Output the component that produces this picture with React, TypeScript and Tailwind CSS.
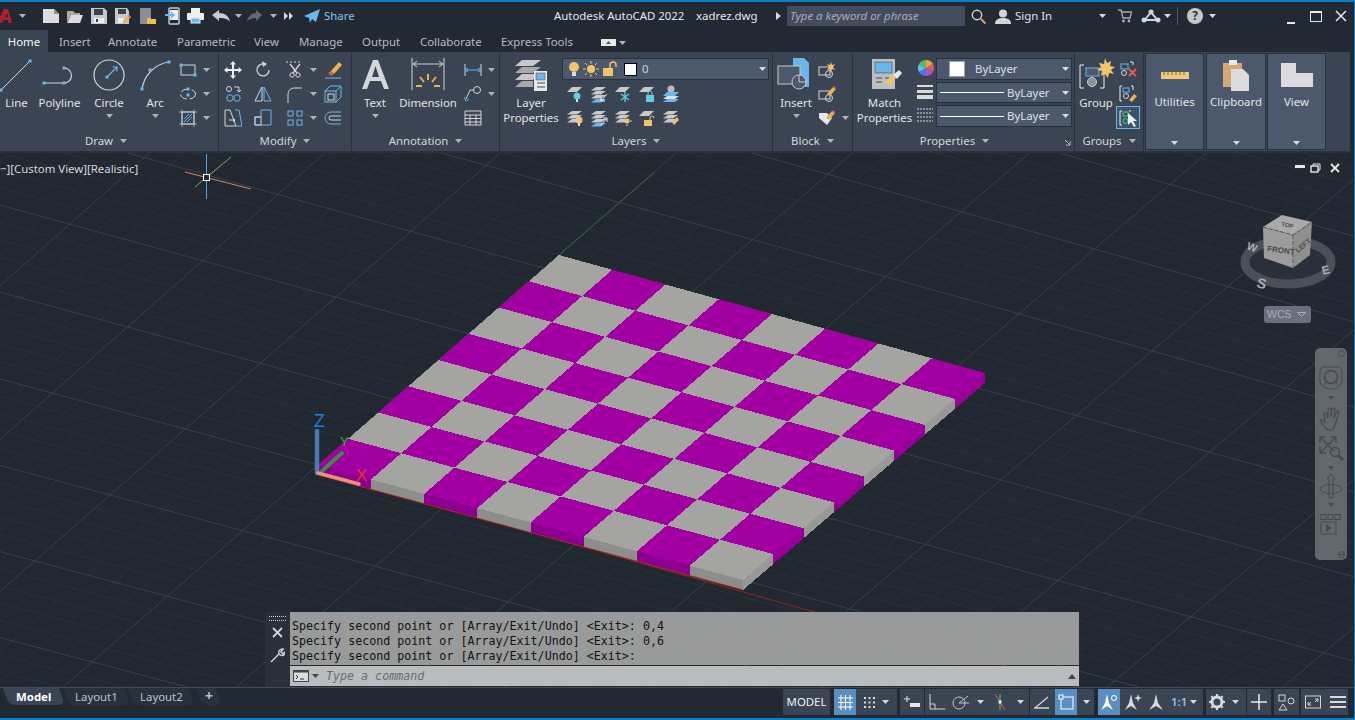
import type { ReactNode } from "react";

const BLUE = "#6ab7ee";
const LT = "#d4d6d8";

type P = [number, number];

// board corners read off the picture, u runs along the red axis, v along the green one
const O: P = [318, 465];
const F: P = [743, 580];
const B: P = [559, 255];
const R: P = [985, 373];

const pt = (u: number, v: number): P => {
  const a = u / 8;
  const b = v / 8;
  return [
    O[0] + a * (F[0] - O[0]) + b * (B[0] - O[0]) + a * b * (R[0] - F[0] - B[0] + O[0]),
    O[1] + a * (F[1] - O[1]) + b * (B[1] - O[1]) + a * b * (R[1] - F[1] - B[1] + O[1]),
  ];
};

const poly = (pts: P[]) => pts.map((p) => `${p[0].toFixed(1)},${p[1].toFixed(1)}`).join(" ");
const down = (p: P, t: number): P => [p[0], p[1] + t];

function range(from: number, to: number) {
  const out: number[] = [];
  for (let i = from; i <= to; i++) out.push(i);
  return out;
}

function Grid() {
  return (
    <g>
      {range(-80, 120).map((k) => {
        const a = pt(k / 2, -40);
        const b = pt(k / 2, 60);
        return (
          <line key={"u" + k} x1={a[0]} y1={a[1]} x2={b[0]} y2={b[1]} stroke={k % 5 === 0 ? "#39414e" : "#2a313c"} strokeWidth="1" />
        );
      })}
      {range(-80, 120).map((k) => {
        const a = pt(-40, k / 2);
        const b = pt(60, k / 2);
        return (
          <line key={"v" + k} x1={a[0]} y1={a[1]} x2={b[0]} y2={b[1]} stroke={k % 5 === 0 ? "#39414e" : "#2a313c"} strokeWidth="1" />
        );
      })}
    </g>
  );
}

function Board() {
  const t = 10;
  return (
    <g shapeRendering="crispEdges">
      {range(0, 7).map((i) => (
        <polygon key={"f" + i} points={poly([pt(i, 0), pt(i + 1, 0), down(pt(i + 1, 0), t), down(pt(i, 0), t)])} fill={i % 2 === 0 ? "#8c008f" : "#8d8e8b"} />
      ))}
      {range(0, 7).map((j) => (
        <polygon key={"r" + j} points={poly([pt(8, j), pt(8, j + 1), down(pt(8, j + 1), t), down(pt(8, j), t)])} fill={j % 2 === 0 ? "#989996" : "#980099"} />
      ))}
      {range(0, 7).map((i) =>
        range(0, 7).map((j) => (
          <polygon key={i + "-" + j} points={poly([pt(i, j), pt(i + 1, j), pt(i + 1, j + 1), pt(i, j + 1)])} fill={(i + j) % 2 === 0 ? "#a300a3" : "#a4a5a1"} />
        ))
      )}
    </g>
  );
}

function Scene() {
  return (
    <svg className="absolute inset-0" width="1354" height="535" viewBox="0 153 1354 535">
      <Grid />
      <line x1="559" y1="255" x2="655" y2="172" stroke="#2f6b38" />
      <line x1="318" y1="472" x2="1080" y2="687" stroke="#8f2626" />
      <Board />
      <line x1="318" y1="475" x2="743" y2="590" stroke="#a52a22" />

      {/* UCS icon */}
      <line x1="322" y1="471" x2="342" y2="453" stroke="#3f8a45" strokeWidth="4" strokeLinecap="round" />
      <line x1="317" y1="473" x2="317" y2="431" stroke="#4a79b5" strokeWidth="4.5" strokeLinecap="round" />
      <line x1="318" y1="473" x2="359" y2="484" stroke="#e8917f" strokeWidth="3.5" strokeLinecap="round" />
      <text x="314" y="427" fill="#1f7de0" fontFamily="Liberation Sans, sans-serif" fontSize="18">Z</text>
      <text x="356" y="481" fill="#e03a2a" fontFamily="Liberation Sans, sans-serif" fontSize="17">X</text>
      <text x="340" y="446" fill="#35b035" fontFamily="Liberation Sans, sans-serif" fontSize="13">Y</text>

      {/* crosshair */}
      <line x1="206.5" y1="154" x2="206.5" y2="199" stroke="#5a9fe0" />
      <line x1="185" y1="172" x2="251" y2="189" stroke="#d9835f" />
      <line x1="195" y1="187" x2="231" y2="157" stroke="#7fb040" />
      <rect x="203.5" y="174.5" width="6" height="6" fill="#222933" stroke="#fff" />

      {/* view cube */}
      <ellipse cx="1288" cy="262" rx="43" ry="22" fill="#2a3038" stroke="#4b5058" strokeWidth="9" />
      <polygon points="1282,215 1312,222 1293,235 1263,227" fill="#a9a9a8" />
      <polygon points="1263,227 1293,235 1293,268 1264,258" fill="#9c9c9b" />
      <polygon points="1293,235 1312,222 1310,255 1293,268" fill="#8f8f8e" />
      <polyline points="1263,227 1293,235 1312,222" fill="none" stroke="#5a5a5a" strokeDasharray="4 2" />
      <line x1="1293" y1="235" x2="1293" y2="268" stroke="#5a5a5a" strokeDasharray="4 2" />
      <text x="1267" y="251" fill="#4a4a4a" fontFamily="Liberation Sans, sans-serif" fontSize="8" fontWeight="700" transform="rotate(8 1267 251)">FRONT</text>
      <text x="1281" y="226" fill="#4a4a4a" fontFamily="Liberation Sans, sans-serif" fontSize="6" fontWeight="700" transform="rotate(12 1281 226)">TOP</text>
      <text x="1298" y="253" fill="#4a4a4a" fontFamily="Liberation Sans, sans-serif" fontSize="7" fontWeight="700" transform="rotate(-40 1298 253)">LEFT</text>
      <text x="1246" y="249" fill="#a9acb0" fontFamily="Liberation Sans, sans-serif" fontSize="11" fontWeight="700" transform="rotate(20 1246 249)">W</text>
      <text x="1323" y="275" fill="#a9acb0" fontFamily="Liberation Sans, sans-serif" fontSize="12" fontWeight="700" transform="rotate(-15 1323 275)">E</text>
      <text x="1256" y="287" fill="#a9acb0" fontFamily="Liberation Sans, sans-serif" fontSize="14" fontWeight="700" transform="rotate(15 1256 287)">S</text>
    </svg>
  );
}

function Caret({ light }: { light?: boolean }) {
  return (
    <svg width="7" height="4" viewBox="0 0 7 4" className="shrink-0">
      <polygon points="0,0 7,0 3.5,4" fill={light ? "#d8dadc" : "#aeb4bc"} />
    </svg>
  );
}

function Grip({ x, y }: { x: number; y: number }) {
  return <rect x={x - 1.5} y={y - 1.5} width="3" height="3" fill={BLUE} />;
}

function Svg({ w, h, children }: { w: number; h: number; children: ReactNode }) {
  return (
    <svg width={w} height={h} viewBox={`0 0 ${w} ${h}`} fill="none" className="shrink-0">
      {children}
    </svg>
  );
}

function Big({ cls, label, caret, children }: { cls: string; label: ReactNode; caret?: boolean; children: ReactNode }) {
  return (
    <div className={`flex flex-col items-center shrink-0 pt-[5px] ${cls}`}>
      <div className="h-[34px] flex items-center justify-center">{children}</div>
      <div className="mt-[3px] text-center leading-[15px] text-[#e2e5e9] whitespace-nowrap">{label}</div>
      {caret && (
        <div className="mt-[4px]">
          <Caret />
        </div>
      )}
    </div>
  );
}

function Small({ caret, cls, children }: { caret?: boolean; cls?: string; children: ReactNode }) {
  return (
    <div className={`h-[24px] flex items-center ${cls ?? ""}`}>
      <div className="w-[18px] h-[18px] flex items-center justify-center shrink-0">{children}</div>
      {caret && (
        <div className="ml-[6px]">
          <Caret />
        </div>
      )}
    </div>
  );
}

function Panel({ title, cls, titleCls, arrow, children }: { title: string; cls: string; titleCls?: string; arrow?: boolean; children: ReactNode }) {
  return (
    <div className={`relative shrink-0 flex flex-col border-r border-[#2a313c] ${cls}`}>
      <div className="h-[79px] flex">{children}</div>
      <div className={`h-[18px] flex items-center justify-center gap-[7px] text-[#d3d7dc] ${titleCls ?? ""}`}>
        <span>{title}</span>
        <Caret />
      </div>
      {arrow && (
        <svg className="absolute right-[3px] bottom-[5px]" width="7" height="7" viewBox="0 0 7 7">
          <path d="M1 1l5 5M6 2v4H2" stroke="#c8ccd0" />
        </svg>
      )}
    </div>
  );
}

function Sheets({ n = 3, tone = "#c9c9c9", top = 2 }: { n?: number; tone?: string; top?: number }) {
  return (
    <>
      {range(0, n - 1).map((i) => (
        <polygon key={i} points={`6,${top + i * 4} 16,${top + i * 4} 11,${top + 3.5 + i * 4} 1,${top + 3.5 + i * 4}`} fill={tone} />
      ))}
    </>
  );
}

function TitleBar() {
  return (
    <div className="h-[28px] flex items-center shrink-0">
      <svg width="12" height="16" viewBox="0 0 12 16" className="shrink-0">
        <path d="M-3 15L4 1h4l4 14H8.500L8 12H3.500L2 15zM5 9.500h3L7.200 5z" fill="#b3202a" fillRule="evenodd" />
      </svg>
      <div className="ml-[7px]"><Caret /></div>
      <div className="ml-[17px]">
        <Svg w={16} h={16}>
          <path d="M0 1h11l5 5v9H0z" fill="#dcdcdc" />
          <path d="M11 1v5h5z" fill="#8a8f96" />
        </Svg>
      </div>
      <div className="ml-[8px]">
        <Svg w={16} h={16}>
          <path d="M0 14V3h6l2 2h5v2H4z" fill="#a9abad" />
          <path d="M4 7h12l-3 8H0z" fill="#dcdcdc" />
        </Svg>
      </div>
      <div className="ml-[8px]">
        <Svg w={16} h={16}>
          <path d="M0 0h13l3 3v13H0z" fill="#c6c8ca" />
          <rect x="3" y="1" width="9" height="6" fill="#3a414d" />
          <rect x="3" y="10" width="10" height="5" fill="#eee" />
          <rect x="5" y="11" width="2" height="3" fill="#3a414d" />
        </Svg>
      </div>
      <div className="ml-[8px]">
        <Svg w={16} h={16}>
          <path d="M0 0h12l2 3v13H0z" fill="#c6c8ca" />
          <rect x="3" y="1" width="8" height="5" fill="#3a414d" />
          <rect x="3" y="10" width="6" height="5" fill="#eee" />
          <path d="M8 13l6-6 2 2-6 6H8z" fill="#e8b44a" />
          <path d="M13 8l1-1 2 2-1 1z" fill="#e25a5a" />
        </Svg>
      </div>
      <div className="ml-[9px]">
        <Svg w={16} h={18}>
          <rect x="0" y="1" width="11" height="16" rx="1" fill="#8b8f95" />
          <path d="M7 11h3l1 1h5v5H7z" fill="#f0c04f" />
        </Svg>
      </div>
      <div className="ml-[9px]">
        <Svg w={15} h={18}>
          <rect x="4" y="1" width="10" height="16" rx="1" fill="none" stroke="#c9cbcd" strokeWidth="1.5" />
          <rect x="5" y="3" width="8" height="10" fill="#eee" />
          <path d="M0 7h6V4l4 4-4 4V9H0z" fill={BLUE} />
        </Svg>
      </div>
      <div className="ml-[7px]">
        <Svg w={17} h={16}>
          <rect x="4" y="0" width="9" height="5" fill="#eee" />
          <rect x="0" y="5" width="17" height="7" rx="1" fill="#eee" />
          <rect x="4" y="10" width="9" height="5" fill={BLUE} stroke="#eee" />
        </Svg>
      </div>
      <div className="ml-[7px]">
        <Svg w={20} h={14}>
          <path d="M1 6l7-5v3c6 0 10 3 11 9-2-3-5-4-11-4v3z" fill="#c9cbcd" />
        </Svg>
      </div>
      <div className="ml-[4px]"><Caret /></div>
      <div className="ml-[5px]">
        <Svg w={16} h={14}>
          <path d="M15 6L9 1v3C5 4 1 7 0 13c2-3 5-4 9-4v3z" fill="#646a73" />
        </Svg>
      </div>
      <div className="ml-[7px]"><Caret /></div>
      <div className="ml-[7px]">
        <Svg w={9} h={8}>
          <path d="M0 0l4 4-4 4zM5 0l4 4-4 4z" fill="#d8dadc" />
        </Svg>
      </div>
      <div className="ml-[11px]">
        <Svg w={16} h={14}>
          <path d="M0 7L16 0l-4 13-4-3-2 4-1-5z" fill={BLUE} />
        </Svg>
      </div>
      <span className="ml-[4px] w-[30px] text-[#84c5ec] whitespace-nowrap">Share</span>

      <span className="ml-[200px] w-[130px] text-[#e6e8ea] whitespace-nowrap">Autodesk AutoCAD 2022</span>
      <span className="ml-[12px] w-[60px] text-[#e6e8ea] whitespace-nowrap">xadrez.dwg</span>
      <div className="ml-[20px]">
        <Svg w={6} h={8}>
          <path d="M0 0l5 4-5 4z" fill="#d8dadc" />
        </Svg>
      </div>
      <div className="ml-[5px] w-[178px] h-[20px] bg-[#434c5c] flex items-center pl-[3px] italic text-[#a9afb8] whitespace-nowrap">Type a keyword or phrase</div>
      <div className="ml-[6px]">
        <Svg w={15} h={15}>
          <circle cx="6" cy="6" r="4.7" stroke="#d4d6d8" strokeWidth="1.4" />
          <path d="M10 10l4.500 4.500" stroke="#d9b36a" strokeWidth="1.8" />
        </Svg>
      </div>
      <div className="ml-[9px]">
        <Svg w={16} h={15}>
          <circle cx="8" cy="4.5" r="4" fill="#d4d6d8" />
          <path d="M0 15c0-4 3-6 8-6s8 2 8 6z" fill="#d4d6d8" />
        </Svg>
      </div>
      <span className="ml-[4px] w-[36px] text-[#e2e5e9] whitespace-nowrap">Sign In</span>
      <div className="ml-[48px]"><Caret light /></div>
      <div className="ml-[12px]">
        <Svg w={14} h={14}>
          <path d="M0 1h3l2 8h7l1.500-6H4" stroke="#a9abad" strokeWidth="1.3" />
          <circle cx="5.5" cy="12" r="1.4" fill="#a9abad" />
          <circle cx="11" cy="12" r="1.4" fill="#a9abad" />
        </Svg>
      </div>
      <div className="ml-[9px]">
        <Svg w={20} h={14}>
          <path d="M10 3L3 12M10 3l7 9M3 11h14" stroke="#d4d6d8" strokeWidth="2" />
          <circle cx="10" cy="3" r="2.5" fill="#d4d6d8" />
          <circle cx="3" cy="11" r="2.5" fill="#d4d6d8" />
          <circle cx="17" cy="11" r="2.5" fill="#d4d6d8" />
        </Svg>
      </div>
      <div className="ml-[3px]"><Caret light /></div>
      <div className="ml-[6px] w-px h-[18px] bg-[#4f5763]" />
      <div className="ml-[9px] w-[16px] h-[16px] rounded-full bg-[#c4c6c8] flex items-center justify-center text-[#2b313b] font-bold text-[12px] leading-none">?</div>
      <div className="ml-[6px]"><Caret light /></div>
      <div className="ml-[71px] self-end mb-[6px] w-[8px] h-[2px] bg-[#e8e8e8]" />
      <div className="ml-[15px] w-[12px] h-[11px] border border-[#e8e8e8] border-t-2" />
      <div className="ml-[13px]">
        <Svg w={12} h={12}>
          <path d="M1 1l10 10M11 1L1 11" stroke="#e8e8e8" strokeWidth="1.5" />
        </Svg>
      </div>
    </div>
  );
}

const tabs = [
  { label: "Insert", cls: "ml-[11px] w-[49px]" },
  { label: "Annotate", cls: "w-[69px]" },
  { label: "Parametric", cls: "w-[77px]" },
  { label: "View", cls: "w-[45px]" },
  { label: "Manage", cls: "w-[63px]" },
  { label: "Output", cls: "w-[58px]" },
  { label: "Collaborate", cls: "w-[81px]" },
  { label: "Express Tools", cls: "w-[100px]" },
];

function TabRow() {
  return (
    <div className="h-[22px] flex shrink-0 items-stretch">
      <div className="w-[48px] pt-[2px] bg-[#3b4453] text-[#f2f4f6] flex items-center justify-center">Home</div>
      {tabs.map((t) => (
        <div key={t.label} className={`${t.cls} pt-[2px] flex items-center text-[#b4bcc7] whitespace-nowrap`}>
          {t.label}
        </div>
      ))}
      <div className="self-center mt-[3px] w-[15px] h-[7px] bg-[#e8e8e8] flex items-center justify-center">
        <svg width="5" height="3" viewBox="0 0 5 3">
          <polygon points="0,3 5,3 2.5,0" fill="#555" />
        </svg>
      </div>
      <div className="self-center ml-[3px] mt-[3px]"><Caret /></div>
    </div>
  );
}

function DrawPanel() {
  return (
    <Panel title="Draw" cls="w-[219px]" titleCls="pr-[6px]">
      <Big cls="w-[33px]" label="Line">
        <Svg w={33} h={34}>
          <path d="M1 32L30 3" stroke={LT} />
          <Grip x={1} y={32} />
          <Grip x={30} y={3} />
        </Svg>
      </Big>
      <Big cls="w-[53px]" label="Polyline">
        <Svg w={53} h={34}>
          <path d="M11 25h20a7.500 7.500 0 0 0 0-15" stroke={LT} strokeWidth="1.2" />
          <Grip x={11} y={25} />
          <Grip x={31} y={25} />
          <Grip x={31} y={10} />
        </Svg>
      </Big>
      <Big cls="w-[46px]" label="Circle" caret>
        <Svg w={46} h={34}>
          <circle cx="23" cy="17" r="15" stroke={LT} strokeWidth="1.2" />
          <path d="M22 18l9-9M26.500 9H31v4.500" stroke={BLUE} strokeWidth="1.2" />
          <Grip x={21} y={19} />
        </Svg>
      </Big>
      <Big cls="w-[46px]" label="Arc" caret>
        <Svg w={46} h={34}>
          <path d="M10 31C12 18 22 6 37 4" stroke={LT} strokeWidth="1.2" />
          <Grip x={10} y={31} />
          <Grip x={18} y={12} />
          <Grip x={37} y={4} />
        </Svg>
      </Big>
      <div className="pt-[5px] ml-[1px]">
        <Small caret>
          <Svg w={18} h={18}>
            <rect x="2" y="4" width="14" height="10" stroke={LT} />
            <Grip x={2} y={4} />
            <Grip x={16} y={14} />
          </Svg>
        </Small>
        <Small caret>
          <Svg w={18} h={18}>
            <ellipse cx="9" cy="9" rx="7.5" ry="5" stroke={LT} strokeDasharray="8 3" />
            <Grip x={9} y={4} />
            <Grip x={9} y={10} />
          </Svg>
        </Small>
        <Small caret>
          <Svg w={18} h={18}>
            <rect x="3" y="3" width="12" height="12" stroke={LT} />
            <path d="M5 13l8-8M5 10l5-5M8 13l5-5" stroke={BLUE} />
            <path d="M3 0v18M15 0v18M0 3h18M0 15h18" stroke={LT} strokeWidth="0.6" />
          </Svg>
        </Small>
      </div>
    </Panel>
  );
}

function ModifyPanel() {
  return (
    <Panel title="Modify" cls="w-[133px]">
      <div className="pt-[5px] ml-[5px]">
        <Small>
          <Svg w={18} h={18}>
            <path d="M9 0l3 3.500h-2V8h4.500V6l3.500 3-3.500 3v-2H10v4.500h2L9 18l-3-3.500h2V10H3.500v2L0 9l3.500-3v2H8V3.500H6z" fill="#eceef0" />
          </Svg>
        </Small>
        <Small>
          <Svg w={18} h={18}>
            <circle cx="5" cy="4" r="2.5" stroke={LT} />
            <path d="M10 2h5v4M13 5l2 2 2-2" stroke={LT} />
            <circle cx="6" cy="13" r="3.2" stroke={BLUE} />
            <circle cx="13" cy="13" r="3.2" stroke={BLUE} />
          </Svg>
        </Small>
        <Small>
          <Svg w={18} h={18}>
            <path d="M1 1h5l6 16H1z" stroke={LT} />
            <path d="M11 1h4l3 16h-6" stroke={BLUE} />
            <path d="M5 11h6M9 9l2 2-2 2" stroke={LT} />
          </Svg>
        </Small>
      </div>
      <div className="pt-[5px] ml-[12px]">
        <Small>
          <Svg w={18} h={18}>
            <path d="M15 9a6 6 0 1 1-4-5.700" stroke={LT} strokeWidth="1.3" />
            <path d="M8 0l5 3-4 3z" fill={LT} />
          </Svg>
        </Small>
        <Small>
          <Svg w={18} h={18}>
            <path d="M8 2v14H1z" stroke={LT} />
            <path d="M10 2v14h7z" stroke={BLUE} />
          </Svg>
        </Small>
        <Small>
          <Svg w={18} h={18}>
            <path d="M7 1h10v15H1V8h6V1z" stroke={BLUE} />
            <rect x="1" y="8" width="6" height="8" stroke={LT} />
          </Svg>
        </Small>
      </div>
      <div className="pt-[5px] ml-[14px]">
        <Small caret>
          <Svg w={18} h={18}>
            <path d="M0 1h16" stroke={LT} strokeDasharray="2 2" />
            <path d="M4 3l7 9M14 3L7 12" stroke={LT} strokeWidth="1.4" />
            <circle cx="6" cy="14" r="2.2" stroke={LT} />
            <circle cx="12" cy="14" r="2.2" stroke={LT} />
          </Svg>
        </Small>
        <Small caret>
          <Svg w={18} h={18}>
            <path d="M2 18V9a6 6 0 0 1 6-6h2" stroke={LT} />
            <path d="M10 3h6" stroke={LT} />
          </Svg>
        </Small>
        <Small caret>
          <Svg w={18} h={18}>
            <rect x="2" y="2" width="5" height="5" stroke={BLUE} />
            <rect x="11" y="2" width="5" height="5" stroke={BLUE} />
            <rect x="2" y="11" width="5" height="5" stroke={BLUE} />
            <rect x="11" y="11" width="5" height="5" stroke={BLUE} />
          </Svg>
        </Small>
      </div>
      <div className="pt-[5px] ml-[7px]">
        <Small>
          <Svg w={18} h={18}>
            <path d="M7 10L15 1l3 3-8 9z" fill="#e8b44a" />
            <path d="M4 12l3-2 3 3-3 2z" fill="#e25a5a" />
            <path d="M1 17h16" stroke={BLUE} />
          </Svg>
        </Small>
        <Small>
          <Svg w={18} h={18}>
            <rect x="1" y="6" width="11" height="11" stroke={BLUE} />
            <path d="M1 6l5-5h11v11l-5 5M12 6l5-5" stroke={BLUE} />
            <rect x="4" y="9" width="6" height="6" stroke={LT} />
          </Svg>
        </Small>
        <Small>
          <Svg w={18} h={18}>
            <path d="M17 3H7a6 6 0 0 0 0 12h10" stroke={BLUE} />
            <path d="M17 7H7a2 2 0 0 0 0 4h10" stroke={LT} />
          </Svg>
        </Small>
      </div>
    </Panel>
  );
}

function AnnotationPanel() {
  return (
    <Panel title="Annotation" cls="w-[148px]">
      <Big cls="w-[46px]" label="Text" caret>
        <Svg w={46} h={34}>
          <path d="M21 2h5l11 29h-5l-3-8H18l-3 8h-5zM20 19h7l-3.500-11z" fill="#d4d6d8" fillRule="evenodd" />
        </Svg>
      </Big>
      <Big cls="w-[60px]" label="Dimension">
        <Svg w={60} h={34}>
          <path d="M14 0v32M46 0v32" stroke={LT} />
          <path d="M15 6h30M19 3l-4 3 4 3M41 3l4 3-4 3" stroke={LT} />
          <path d="M30 16v6M22 19l4 5M38 19l-4 5M18 28h6M36 28h6" stroke="#e8b44a" strokeWidth="2" />
        </Svg>
      </Big>
      <div className="pt-[5px] ml-[6px]">
        <Small caret>
          <Svg w={18} h={18}>
            <path d="M1 3v12M17 3v12" stroke={LT} />
            <path d="M1 9h16M4 7L1 9l3 2M14 7l3 2-3 2" stroke={BLUE} />
          </Svg>
        </Small>
        <Small caret>
          <Svg w={18} h={18}>
            <circle cx="13" cy="5" r="3.5" stroke={LT} />
            <path d="M10 5H6L2 14" stroke={LT} />
            <path d="M0 12l2 4 3-2" stroke={BLUE} />
          </Svg>
        </Small>
        <Small>
          <Svg w={18} h={18}>
            <path d="M1 2h16v14H1zM1 6h16M1 9.500h16M1 13h16M6 6v10M12 6v10" stroke={LT} />
          </Svg>
        </Small>
      </div>
    </Panel>
  );
}

function LayerRow({ children }: { children: ReactNode }) {
  return <div className="h-[24px] flex items-center gap-[6px]">{children}</div>;
}

function LayerIcon({ children }: { children: ReactNode }) {
  return <Svg w={18} h={18}>{children}</Svg>;
}

function LayersPanel() {
  return (
    <Panel title="Layers" cls="w-[273px]">
      <Big cls="w-[62px]" label={<>Layer<br />Properties</>}>
        <Svg w={36} h={34}>
          <polygon points="9,2 28,2 20,8 2,8" fill="#c9c9c9" />
          <polygon points="9,9 28,9 20,15 2,15" fill="#a8a8a8" />
          <polygon points="9,16 24,16 20,22 2,22" fill="#c9c9c9" />
          <polygon points="9,23 20,23 20,29 2,29" fill="#a8a8a8" />
          <rect x="21" y="13" width="13" height="20" fill="#e8e8e8" />
          <rect x="23" y="15" width="9" height="7" fill={BLUE} stroke="#444" strokeWidth="0.5" />
          <path d="M24 25h8M24 29h8" stroke="#444" />
        </Svg>
      </Big>
      <div className="pt-[5px]">
        <div className="w-[207px] h-[22px] bg-[#4c596d] border border-[#2a313c] flex items-center">
          <div className="ml-[5px]">
            <Svg w={12} h={16}>
              <circle cx="6" cy="6" r="5" fill="#f4c46a" />
              <rect x="4" y="11" width="4" height="4" fill="#ddd" />
            </Svg>
          </div>
          <div className="ml-[3px]">
            <Svg w={16} h={16}>
              <circle cx="8" cy="8" r="4" fill="#f4c46a" />
              <path d="M8 0v3M8 13v3M0 8h3M13 8h3M2 2l2 2M12 12l2 2M14 2l-2 2M2 14l2-2" stroke="#f4c46a" />
            </Svg>
          </div>
          <div className="ml-[4px]">
            <Svg w={15} h={16}>
              <rect x="0" y="7" width="10" height="8" fill="#f4c46a" />
              <path d="M7 7V4a3 3 0 0 1 6 0v2" stroke="#f4c46a" strokeWidth="1.5" />
            </Svg>
          </div>
          <div className="ml-[6px] w-[13px] h-[13px] bg-white border border-black" />
          <span className="ml-[5px] text-[#b9dcf4]">0</span>
          <div className="ml-auto mr-[2px]"><Caret light /></div>
        </div>
        <div className="ml-[4px] mt-[2px]">
          <LayerRow>
            <LayerIcon>
              <polygon points="6,2 16,2 11,7 1,7" fill="#c9c9c9" />
              <circle cx="11" cy="11" r="3.5" fill="#5fd0e0" />
              <rect x="10" y="14" width="2" height="3" fill="#ddd" />
            </LayerIcon>
            <LayerIcon>
              <Sheets />
              <polygon points="6,14 16,14 11,17.500 1,17.500" fill={BLUE} />
              <path d="M17 9l-6 7M11 12v4h4" stroke="#eee" />
            </LayerIcon>
            <LayerIcon>
              <polygon points="6,2 16,2 11,7 1,7" fill="#c9c9c9" />
              <path d="M11 7v10M7 9l8 6M15 9l-8 6" stroke="#5fd0e0" strokeWidth="1.3" />
            </LayerIcon>
            <LayerIcon>
              <polygon points="6,2 16,2 11,7 1,7" fill="#c9c9c9" />
              <rect x="8" y="10" width="8" height="7" fill="#5fd0e0" />
              <path d="M10 10V8a2 2 0 0 1 4 0v2" stroke="#5fd0e0" />
            </LayerIcon>
            <LayerIcon>
              <circle cx="9" cy="4" r="3.5" fill="#bdbdbd" />
              <polygon points="5,7 17,7 13,11 1,11" fill={BLUE} />
              <polygon points="5,11 17,11 13,14 1,14" fill="#e0e0e0" />
              <polygon points="5,14 17,14 13,17 1,17" fill={BLUE} />
            </LayerIcon>
          </LayerRow>
          <LayerRow>
            <LayerIcon>
              <Sheets />
              <circle cx="13" cy="11" r="3.5" fill="#f4c46a" />
              <rect x="12" y="14" width="2" height="3" fill="#ddd" />
            </LayerIcon>
            <LayerIcon>
              <Sheets />
              <polygon points="6,14 16,14 11,17.500 1,17.500" fill={BLUE} />
              <path d="M11 16l6-7M13 9h4v4" stroke="#eee" />
            </LayerIcon>
            <LayerIcon>
              <Sheets />
              <circle cx="13" cy="12" r="2.5" fill="#f4c46a" />
              <path d="M13 7v2M13 15v2M8 12h2M16 12h2" stroke="#f4c46a" />
            </LayerIcon>
            <LayerIcon>
              <polygon points="6,2 16,2 11,7 1,7" fill="#c9c9c9" />
              <rect x="6" y="11" width="8" height="6" fill="#f4c46a" />
              <path d="M12 11V9a2 2 0 0 1 4 0" stroke="#f4c46a" />
            </LayerIcon>
            <LayerIcon>
              <Sheets />
              <path d="M10 13l5-5 2 3-5 5z" fill="#e8c36a" />
            </LayerIcon>
          </LayerRow>
        </div>
      </div>
    </Panel>
  );
}

function BlockPanel() {
  return (
    <Panel title="Block" cls="w-[80px]">
      <Big cls="w-[46px]" label="Insert" caret>
        <Svg w={46} h={34}>
          <path d="M20 0h11l5 5v24H20z" fill={BLUE} />
          <rect x="5" y="8" width="22" height="18" fill="#4c596d" stroke="#c9c9c9" />
          <circle cx="26" cy="24" r="7" fill="#4c596d" stroke="#c9c9c9" />
          <path d="M26 17v7h7" stroke="#c9c9c9" />
        </Svg>
      </Big>
      <div className="pt-[5px] ml-[-1px]">
        <Small>
          <Svg w={18} h={18}>
            <rect x="1" y="6" width="11" height="8" stroke={LT} />
            <circle cx="11" cy="13" r="3.5" stroke={LT} />
            <path d="M13 1l1 3 3-1-2 3 2 3-3-1-1 3-1-3-3 1 2-3-2-3 3 1z" fill="#f4c46a" />
          </Svg>
        </Small>
        <Small>
          <Svg w={18} h={18}>
            <rect x="1" y="6" width="11" height="8" stroke={LT} />
            <circle cx="11" cy="13" r="3.5" stroke={LT} />
            <path d="M9 9l6-7 3 2-6 7z" fill="#e8b44a" />
            <path d="M15 2l1-1 2 2-1 1z" fill="#e25a5a" />
          </Svg>
        </Small>
        <Small caret>
          <Svg w={18} h={18}>
            <path d="M1 4h8l5 5-5 7-8-7z" fill="#e8e8e8" />
            <path d="M8 9l6-7 3 2-6 7z" fill="#e8b44a" />
            <path d="M14 2l1-1 2 2-1 1z" fill="#e25a5a" />
          </Svg>
        </Small>
      </div>
    </Panel>
  );
}

function Combo({ cls, line, swatch }: { cls: string; line?: boolean; swatch?: boolean }) {
  return (
    <div className={`w-[136px] bg-[#4c596d] border border-[#2a313c] flex items-center text-[#dfe3e8] ${cls}`}>
      {swatch && <div className="ml-[12px] w-[16px] h-[16px] bg-white border border-[#9aa3ad]" />}
      {swatch && <span className="ml-[10px]">ByLayer</span>}
      {line && <div className="ml-[3px] w-[64px] h-px bg-white" />}
      {line && <span className="ml-[3px]">ByLayer</span>}
      <div className="ml-auto mr-[2px]"><Caret light /></div>
    </div>
  );
}

function PropertiesPanel() {
  return (
    <Panel title="Properties" cls="w-[222px]" titleCls="pr-[18px]" arrow>
      <Big cls="w-[63px]" label={<>Match<br />Properties</>}>
        <Svg w={36} h={34}>
          <rect x="5" y="1" width="23" height="30" fill="#bdbfc1" />
          <rect x="8" y="4" width="17" height="11" fill={BLUE} stroke="#444" strokeWidth="0.6" />
          <path d="M9 20h6M9 24h6M18 20h4" stroke="#444" />
          <path d="M18 24l7-7 4 3-6 8z" fill="#efc46a" />
          <path d="M26 17l6-5 3 3-5 6z" fill="#e8e8e8" />
        </Svg>
      </Big>
      <div className="pt-[6px] w-[18px] ml-[1px] flex flex-col">
        <div className="h-[24px]">
          <svg width="18" height="18" viewBox="0 0 18 18">
            <path d="M9 9V1a8 8 0 0 1 7 4z" fill="#e8a43a" />
            <path d="M9 9l7-4a8 8 0 0 1 0 8z" fill="#e25a5a" />
            <path d="M9 9l7 4a8 8 0 0 1-7 4z" fill="#a855c8" />
            <path d="M9 9v8a8 8 0 0 1-7-4z" fill="#5a6ee0" />
            <path d="M9 9l-7 4a8 8 0 0 1 0-8z" fill="#5fc0e0" />
            <path d="M9 9L2 5a8 8 0 0 1 7-4z" fill="#5ab85a" />
          </svg>
        </div>
        <div className="h-[24px]">
          <svg width="16" height="16" viewBox="0 0 16 16">
            <path d="M0 2h16v2H0zM0 7h16v3H0zM0 12h16v4H0z" fill="#d8dadc" />
          </svg>
        </div>
        <div className="h-[24px]">
          <svg width="16" height="16" viewBox="0 0 16 16">
            <path d="M0 2h16M0 6h16M0 10h16M0 14h16" stroke="#d8dadc" strokeDasharray="2 1" />
          </svg>
        </div>
      </div>
      <div className="pt-[5px] ml-[1px] flex flex-col">
        <Combo cls="h-[22px]" swatch />
        <Combo cls="h-[21px] mt-[2px]" line />
        <Combo cls="h-[22px] mt-[2px]" line />
      </div>
    </Panel>
  );
}

function GroupsPanel() {
  return (
    <Panel title="Groups" cls="w-[69px]">
      <Big cls="w-[42px]" label="Group">
        <Svg w={42} h={34}>
          <path d="M9 7H5v23h4M25 7h4v23h-4" stroke="#eee" />
          <rect x="11" y="10" width="13" height="8" stroke={BLUE} fill="#4c596d" />
          <circle cx="17" cy="24" r="4.5" fill="#8e9398" stroke="#ccc" />
          <path d="M30 0l2 5 4-2-1 5 5 1-4 3 3 4-5-1-1 5-3-4-4 2 1-5-5-1 4-3-2-4 5 1z" fill="#f4c46a" />
        </Svg>
      </Big>
      <div className="pt-[5px] ml-[2px] flex flex-col">
        <Small>
          <Svg w={18} h={18}>
            <rect x="2" y="3" width="7" height="5" stroke={BLUE} />
            <circle cx="5" cy="12" r="2.5" stroke={LT} />
            <path d="M10 8l7 7M17 8l-7 7" stroke="#e25a5a" strokeWidth="2" />
            <path d="M11 1h3v3" stroke="#eee" />
          </Svg>
        </Small>
        <Small>
          <Svg w={18} h={18}>
            <path d="M3 1H1v15h2M12 1h2v4" stroke="#eee" />
            <rect x="4" y="3" width="6" height="4" stroke={BLUE} />
            <circle cx="7" cy="11" r="2.5" stroke={LT} />
            <path d="M10 15l5-6 3 2-5 6z" fill="#e8b44a" />
          </Svg>
        </Small>
        <div className="w-[24px] h-[23px] ml-[-3px] border border-[#6ab7ee] bg-[#3d5368] flex items-center justify-center">
          <Svg w={18} h={18}>
            <path d="M3 2H1v14h2M10 2h2" stroke="#eee" />
            <rect x="4" y="3" width="5" height="4" stroke="#4ecb71" />
            <circle cx="6.5" cy="12" r="2.5" stroke="#4ecb71" />
            <path d="M9 4v12l3-3 3 5 2-1-3-5h4z" fill="#f0f0f0" />
          </Svg>
        </div>
      </div>
    </Panel>
  );
}

function SlideOut({ cls, label, children }: { cls: string; label: string; children: ReactNode }) {
  return (
    <div className={`shrink-0 h-[97px] bg-[#4c596d] border border-[#2a313c] flex flex-col items-center ${cls}`}>
      <div className="h-[41px] flex items-center justify-center">{children}</div>
      <div className="mt-[-1px] leading-[15px] text-[#e2e5e9] whitespace-nowrap">{label}</div>
      <div className="mt-auto mb-[4px]"><Caret light /></div>
    </div>
  );
}

function Ribbon() {
  return (
    <div className="h-[101px] shrink-0 bg-[#3b4453] border-b-2 border-[#2a313c] w-[1350px] flex pt-px overflow-hidden">
      <DrawPanel />
      <ModifyPanel />
      <AnnotationPanel />
      <LayersPanel />
      <BlockPanel />
      <PropertiesPanel />
      <GroupsPanel />
      <SlideOut cls="ml-[1px] w-[59px]" label="Utilities">
        <Svg w={30} h={8}>
          <rect x="1" y="1" width="28" height="7" fill="#eec97a" />
          <path d="M4 1v3M8 1v3M12 1v3M16 1v3M20 1v3M24 1v3" stroke="#8a6a2a" />
        </Svg>
      </SlideOut>
      <SlideOut cls="ml-[2px] w-[60px]" label="Clipboard">
        <Svg w={28} h={32}>
          <rect x="1" y="4" width="19" height="24" fill="#d2a873" />
          <rect x="7" y="1" width="8" height="5" fill="#e8e8e8" />
          <path d="M9 10h12l6 6v16H9z" fill="#dcdcdc" />
        </Svg>
      </SlideOut>
      <SlideOut cls="ml-[1px] w-[59px]" label="View">
        <Svg w={32} h={24}>
          <path d="M0 0h15v10h17v14H0z" fill="#dcdcdc" />
        </Svg>
      </SlideOut>
    </div>
  );
}

function NavBar() {
  const stroke = "#454a50";
  const arrow = (
    <svg width="6" height="4" viewBox="0 0 6 4" className="block">
      <polygon points="0,0 6,0 3,4" fill={stroke} />
    </svg>
  );
  return (
    <div className="absolute left-[1315px] top-[195px] w-[32px] h-[212px] rounded-[5px] bg-[#63686d] flex flex-col items-center">
      <div className="self-end mr-[2px] mt-[2px] w-[7px] h-[7px] rounded-full border border-[#454a50]" />
      <div className="mt-[9px]">
        <Svg w={24} h={24}>
          <path d="M5 1h14a4 4 0 0 1 4 4v10c0 5-5 8-11 8S1 20 1 15V5a4 4 0 0 1 4-4z" stroke={stroke} />
          <circle cx="12" cy="11" r="6.5" stroke={stroke} strokeWidth="1.5" />
          <path d="M4 20l4-5M20 20l-4-5" stroke={stroke} />
        </Svg>
      </div>
      <div className="mt-[6px]">{arrow}</div>
      <div className="mt-[7px]">
        <Svg w={24} h={24}>
          <path d="M9 23c-3-2-6-6-8-10 2-1 3 0 5 2L5 6c1-1 2 0 3 1l1 4V2c1-1 2-1 3 0v8l1-8c1-1 2-1 3 0l-1 9 3-7c1-1 2 0 2 1l-3 10c-1 3-2 5-3 8z" stroke={stroke} strokeWidth="1.2" />
        </Svg>
      </div>
      <div className="mt-[4px]">
        <Svg w={26} h={26}>
          <path d="M2 2l14 14M18 2L2 18M2 2h6M2 2v6M18 2h-6M18 2v6M2 18h6M2 18v-6" stroke={stroke} strokeWidth="1.5" />
          <circle cx="17" cy="17" r="4.5" stroke={stroke} strokeWidth="1.5" />
          <path d="M20 20l5 5" stroke={stroke} strokeWidth="2.5" />
        </Svg>
      </div>
      <div className="mt-[5px]">{arrow}</div>
      <div className="mt-[3px]">
        <Svg w={24} h={26}>
          <path d="M12 1l4 5h-2v19h-4V6H8z" stroke={stroke} />
          <ellipse cx="12" cy="16" rx="11" ry="4.5" stroke={stroke} />
        </Svg>
      </div>
      <div className="mt-[4px]">{arrow}</div>
      <div className="mt-[7px]">
        <Svg w={22} h={24}>
          <rect x="1" y="0.5" width="5" height="5" stroke={stroke} />
          <rect x="8" y="0.5" width="5" height="5" stroke={stroke} />
          <rect x="15" y="0.5" width="5" height="5" stroke={stroke} />
          <rect x="1" y="8" width="15" height="12" stroke={stroke} />
          <polygon points="6,10 12,14 6,18" fill={stroke} />
        </Svg>
      </div>
      <div className="mt-auto self-end mr-[2px] mb-[2px] w-[7px] h-[7px] rounded-full border border-[#454a50] flex items-center justify-center">
        <div className="w-[5px] h-px bg-[#454a50]" />
      </div>
    </div>
  );
}

function CommandLine() {
  return (
    <div className="absolute left-[265px] top-[459px] w-[814px] h-[75px] flex">
      <div className="w-[25px] bg-[#2a313c]/90 flex flex-col items-center">
        <div className="mt-[4px] w-[17px] h-[5px] border-y border-dotted border-[#cfd2d6]" />
        <div className="mt-[6px]">
          <Svg w={11} h={11}>
            <path d="M1 1l9 9M10 1l-9 9" stroke="#cfd2d6" strokeWidth="1.8" />
          </Svg>
        </div>
        <div className="mt-[10px]">
          <Svg w={15} h={15}>
            <path d="M1 14l8-8M9 6c-1-3 1-5 4-5l-2 3 2 2 2-2c0 3-3 5-6 2z" stroke="#cfd2d6" strokeWidth="1.5" />
          </Svg>
        </div>
      </div>
      <div className="flex-1 flex flex-col font-['DejaVu_Sans_Mono',monospace] text-[11.66px] text-[#111]">
        <div className="h-[53px] bg-[#a6a6a6]/90 pt-[7px] pl-[2px] leading-[15px] whitespace-pre">
          <div>Specify second point or [Array/Exit/Undo] &lt;Exit&gt;: 0,4</div>
          <div>Specify second point or [Array/Exit/Undo] &lt;Exit&gt;: 0,6</div>
          <div>Specify second point or [Array/Exit/Undo] &lt;Exit&gt;:</div>
        </div>
        <div className="h-[20px] mt-[1px] bg-[#c3c4c5]/95 flex items-center pl-[3px] text-[#6a6d70] italic">
          <Svg w={16} h={12}>
            <rect x="0.5" y="0.5" width="15" height="11" fill="#ddd" stroke="#444" />
            <rect x="0.5" y="0.5" width="15" height="2" fill="#444" />
            <path d="M3 5l2 2-2 2M7 9h4" stroke="#333" />
          </Svg>
          <svg width="7" height="4" viewBox="0 0 7 4" className="ml-[3px]"><polygon points="0,0 7,0 3.5,4" fill="#444" /></svg>
          <span className="ml-[7px] mt-[1px]">Type a command</span>
          <svg width="8" height="5" viewBox="0 0 8 5" className="ml-auto mr-[3px]"><polygon points="0,5 8,5 4,0" fill="#444" /></svg>
        </div>
      </div>
    </div>
  );
}

function Viewport() {
  return (
    <div className="relative h-[534px] shrink-0 overflow-hidden bg-[#212830]">
      <Scene />
      <div className="absolute left-0 top-[7px] text-[#d3d7dc] whitespace-nowrap">−][Custom View][Realistic]</div>
      <div className="absolute left-[1295px] top-[12px] w-[10px] h-[3px] bg-[#e8e8e8]" />
      <div className="absolute left-[1310px] top-[10px]">
        <Svg w={11} h={10}>
          <path d="M3 3V1h7v6H8" stroke="#e8e8e8" />
          <rect x="1" y="3" width="7" height="6" stroke="#e8e8e8" strokeWidth="1.4" />
        </Svg>
      </div>
      <div className="absolute left-[1330px] top-[10px]">
        <Svg w={10} h={10}>
          <path d="M1 1l8 8M9 1L1 9" stroke="#e8e8e8" strokeWidth="1.8" />
        </Svg>
      </div>
      <div className="absolute left-[1264px] top-[153px] w-[47px] h-[17px] rounded-[3px] bg-[#69717e] flex items-center pl-[3px] gap-[5px] text-[10.5px] text-[#a9aeb6] font-['Liberation_Sans',sans-serif]">
        WCS
        <svg width="9" height="5" viewBox="0 0 9 5"><polygon points="0.5,0.5 8.5,0.5 4.5,4.5" fill="none" stroke="#a9aeb6" /></svg>
      </div>
      <NavBar />
      <CommandLine />
    </div>
  );
}

function Tab({ cls, active, children }: { cls: string; active?: boolean; children: ReactNode }) {
  return (
    <div
      className={`h-[17px] flex items-center justify-center rounded-b-[6px] skew-x-[20deg] ${active ? "bg-[#3b4453] text-white font-bold" : "bg-[#2a313c] text-[#bcc3cc]"} ${cls}`}
    >
      <span className="skew-x-[-20deg]">{children}</span>
    </div>
  );
}

function StatusBtn({ cls, on, children }: { cls?: string; on?: boolean; children: ReactNode }) {
  return <div className={`h-full flex items-center justify-center shrink-0 ${on ? "bg-[#5b8fc4]" : ""} ${cls ?? ""}`}>{children}</div>;
}

function StatusGroup({ cls, children }: { cls: string; children: ReactNode }) {
  return <div className={`h-[26px] bg-[#3b4453] flex items-center shrink-0 ${cls}`}>{children}</div>;
}

function StatusBar() {
  return (
    <div className="h-[31px] shrink-0 flex border-t border-[#434b58] relative">
      <div className="flex items-start pl-[6px] gap-[4px]">
        <Tab cls="w-[56px]" active>Model</Tab>
        <Tab cls="w-[61px]">Layout1</Tab>
        <Tab cls="w-[60px]">Layout2</Tab>
        <Tab cls="ml-[4px] w-[20px]">
          <span className="font-bold text-[14px] leading-none">+</span>
        </Tab>
      </div>
      <div className="absolute left-[783px] top-[1px] flex items-center gap-[1px]">
        <StatusGroup cls="w-[47px] justify-center text-[#f0f2f4]">MODEL</StatusGroup>
        <StatusGroup cls="ml-[3px] w-[63px]">
          <StatusBtn cls="w-[22px]" on>
            <Svg w={15} h={15}>
              <path d="M0 3h15M0 7.500h15M0 12h15M3 0v15M7.500 0v15M12 0v15" stroke="#fff" />
            </Svg>
          </StatusBtn>
          <StatusBtn cls="w-[26px]">
            <Svg w={13} h={13}>
              <path d="M1 2h11M1 6.500h11M1 11h11" stroke="#d8dadc" strokeWidth="2" strokeDasharray="2 2.5" />
            </Svg>
          </StatusBtn>
          <Caret light />
        </StatusGroup>
        <StatusGroup cls="ml-[2px] w-[24px] justify-center">
          <Svg w={16} h={14}>
            <path d="M0 4h6M3 1v6" stroke="#e8e8e8" />
            <rect x="6" y="8" width="10" height="4" fill="#e8e8e8" />
          </Svg>
        </StatusGroup>
        <StatusGroup cls="w-[104px] pl-[4px]">
          <Svg w={16} h={16}>
            <path d="M1 0v15h15M1 10h5v5" stroke="#d4d6d8" />
          </Svg>
          <div className="ml-[7px]">
            <Svg w={18} h={16}>
              <circle cx="7" cy="9" r="6" stroke="#c4c6c8" />
              <path d="M7 9l9-7M7 9h10" stroke="#c4c6c8" />
            </Svg>
          </div>
          <div className="ml-[7px]"><Caret light /></div>
          <div className="ml-[8px]">
            <Svg w={16} h={18}>
              <path d="M3 1l10 16" stroke="#e25a5a" />
              <path d="M8 1v16" stroke="#4ecb71" />
              <rect x="6.5" y="7.5" width="3" height="3" fill="#eee" />
            </Svg>
          </div>
          <div className="ml-[9px]"><Caret light /></div>
        </StatusGroup>
        <StatusGroup cls="w-[64px] pl-[4px]">
          <Svg w={16} h={14}>
            <path d="M0 13h15M1 13L14 2" stroke="#d4d6d8" strokeWidth="1.3" />
          </Svg>
          <StatusBtn cls="ml-[5px] w-[22px]" on>
            <Svg w={16} h={16}>
              <rect x="3" y="3" width="12" height="12" stroke="#fff" />
              <rect x="1" y="1" width="4" height="4" fill="#5b8fc4" stroke="#fff" />
            </Svg>
          </StatusBtn>
          <div className="ml-[6px]"><Caret light /></div>
        </StatusGroup>
        <StatusGroup cls="ml-[3px] w-[105px]">
          <StatusBtn cls="w-[22px]" on>
            <Svg w={18} h={18}>
              <path d="M7 1l2 9 4 7-6-4-6 4 4-7z" fill="#fff" />
              <circle cx="14" cy="5" r="2.5" stroke="#fff" />
            </Svg>
          </StatusBtn>
          <div className="ml-[4px]">
            <Svg w={18} h={18}>
              <path d="M7 1l2 9 4 7-6-4-6 4 4-7z" fill="#d8dadc" />
              <path d="M14 1l1 3 3 1-3 1-1 3-1-3-3-1 3-1z" fill="#d8dadc" />
            </Svg>
          </div>
          <div className="ml-[6px]">
            <Svg w={16} h={18}>
              <path d="M8 1l2 9 5 7-7-4-7 4 5-7z" fill="#d8dadc" />
            </Svg>
          </div>
          <span className="ml-[7px] text-[#8cc4ee] font-semibold">1:1</span>
          <div className="ml-[3px]"><Caret light /></div>
        </StatusGroup>
        <StatusGroup cls="ml-[2px] w-[40px] pl-[3px]">
          <Svg w={16} h={16}>
            <circle cx="8" cy="8" r="5" stroke="#d8dadc" strokeWidth="3" />
            <path d="M8 0v3M8 13v3M0 8h3M13 8h3M2.300 2.300l2 2M11.700 11.700l2 2M13.700 2.300l-2 2M4.300 11.700l-2 2" stroke="#d8dadc" strokeWidth="2.2" />
          </Svg>
          <div className="ml-[7px]"><Caret light /></div>
        </StatusGroup>
        <StatusGroup cls="w-[24px] justify-center">
          <Svg w={16} h={16}>
            <path d="M8 0v16M0 8h16" stroke="#e8e8e8" strokeWidth="1.5" />
          </Svg>
        </StatusGroup>
        <StatusGroup cls="ml-[2px] w-[25px] justify-center">
          <Svg w={17} h={17}>
            <rect x="1" y="1" width="6" height="6" stroke="#d4d6d8" />
            <circle cx="13" cy="7" r="3" stroke="#d4d6d8" />
            <path d="M5 10l4 6H1z" stroke="#d4d6d8" />
          </Svg>
        </StatusGroup>
        <StatusGroup cls="ml-[1px] w-[47px] pl-[4px]">
          <Svg w={16} h={14}>
            <rect x="0.5" y="1" width="15" height="12" stroke="#d4d6d8" />
            <path d="M3 10l3-3M3 7v3h3M13 4l-3 3M10 4h3v3" stroke="#d4d6d8" />
          </Svg>
          <div className="ml-[9px]">
            <Svg w={16} h={14}>
              <path d="M0 2h16M0 7h16M0 12h16" stroke="#d8dadc" strokeWidth="2" />
            </Svg>
          </div>
        </StatusGroup>
      </div>
    </div>
  );
}

export default function App() {
  return (
    <div className="w-[1355px] h-[720px] overflow-hidden flex flex-col bg-[#222933] border-t-2 border-r border-b-2 border-[#0c7fc4] text-[11.4px] font-['Noto_Sans',sans-serif]">
      <TitleBar />
      <TabRow />
      <Ribbon />
      <Viewport />
      <StatusBar />
    </div>
  );
}
